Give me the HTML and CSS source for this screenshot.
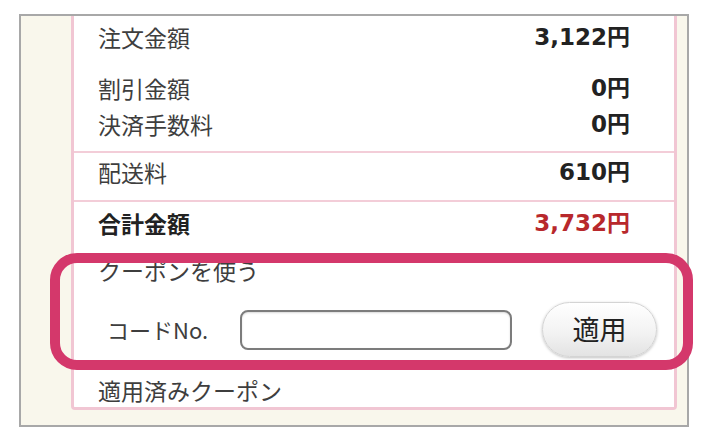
FILE: index.html
```html
<!DOCTYPE html>
<html lang="ja">
<head>
<meta charset="utf-8">
<title>注文金額</title>
<link rel="stylesheet" href="styles.css">
</head>
<body>
<div class="shot">
  <div class="frame">
    <div class="panel">
      <div class="group g1">
        <div class="row"><span class="label">注文金額</span><span class="val">3,122円</span></div>
        <div class="row gap-big"><span class="label">割引金額</span><span class="val">0円</span></div>
        <div class="row gap-small"><span class="label">決済手数料</span><span class="val">0円</span></div>
      </div>
      <div class="group g2">
        <div class="row"><span class="label">配送料</span><span class="val">610円</span></div>
      </div>
      <div class="group g3">
        <div class="row total"><span class="label">合計金額</span><span class="val red">3,732円</span></div>
        <div class="coupon-title">クーポンを使う</div>
        <div class="code-row">
          <span class="code-label">コードNo.</span>
          <input class="code-input" type="text">
          <button class="apply" type="button">適用</button>
        </div>
        <div class="applied">適用済みクーポン</div>
      </div>
    </div>
  </div>
  <div class="highlight"></div>
</div>
</body>
</html>
```
FILE: styles.css
```css
html, body {
  margin: 0;
  padding: 0;
  background: #ffffff;
}
body {
  font-family: "Noto Sans CJK JP", "Liberation Sans", sans-serif;
  color: #3e3e3e;
}
.shot {
  position: relative;
  width: 707px;
  height: 441px;
  overflow: hidden;
}
.frame {
  box-sizing: border-box;
  margin: 14px 0 0 19px;
  width: 670px;
  height: 413px;
  background: #f9f7ec;
  border: 2px solid #a8a8a8;
  padding: 0 10px 15px 50px;
}
.panel {
  background: #ffffff;
  border-left: 3px solid #f1c6d3;
  border-right: 3px solid #f1c6d3;
  border-bottom: 3px solid #f1c6d3;
  border-radius: 0 0 4px 4px;
  padding: 0 44px 0 24px;
}
.group {
  margin: 0 -44px 0 -24px;
  padding-left: 24px;
  padding-right: 44px;
}
.g1 {
  padding-top: 4px;
  padding-bottom: 10px;
  border-bottom: 2px solid #f3cdd8;
}
.g2 {
  padding-top: 2px;
  padding-bottom: 11px;
  border-bottom: 2px solid #f3cdd8;
}
.g3 {
  padding-top: 4px;
}
.row {
  display: flex;
  justify-content: space-between;
  align-items: center;
  height: 34px;
}
.gap-big { margin-top: 17px; }
.gap-small { margin-top: 2px; }
.label {
  font-size: 23px;
  line-height: 34px;
}
.val {
  font-family: "DejaVu Sans", "Noto Sans CJK JP", sans-serif;
  font-weight: bold;
  font-size: 23px;
  line-height: 34px;
  color: #222222;
}
.total .label {
  font-weight: bold;
  color: #222222;
}
.val.red {
  color: #b8282c;
}
.coupon-title {
  margin-top: 13px;
  font-size: 23px;
  line-height: 34px;
  height: 34px;
}
.code-row {
  display: flex;
  align-items: center;
  margin-top: 14px;
  margin-right: -30px;
  height: 56px;
  padding-left: 9px;
}
.code-row > * {
  flex-shrink: 0;
}
.code-label {
  width: 133px;
  font-size: 22px;
  line-height: 34px;
}
.code-input {
  box-sizing: border-box;
  width: 272px;
  height: 40px;
  margin: 2px 0 0 0;
  border: 2px solid #7c7c7c;
  border-radius: 8px;
  background: #ffffff;
  box-shadow: inset 0 1px 2px rgba(0,0,0,0.15);
  padding: 0;
}
.apply {
  box-sizing: border-box;
  margin-left: 30px;
  width: 115px;
  height: 55px;
  border: 1px solid #d4d4d4;
  border-radius: 28px;
  background: linear-gradient(#ffffff, #f3f3f3 55%, #e3e3e3);
  box-shadow: 0 1px 3px rgba(0,0,0,0.25);
  font-family: "Noto Sans CJK JP", sans-serif;
  font-size: 27px;
  line-height: 30px;
  color: #222222;
  padding: 0;
}
.applied {
  margin-top: 16px;
  font-size: 23px;
  line-height: 34px;
  height: 34px;
}
.highlight {
  position: absolute;
  box-sizing: border-box;
  left: 50px;
  top: 253px;
  width: 643px;
  height: 117px;
  border: 10px solid #d4386b;
  border-radius: 27px;
}
```
